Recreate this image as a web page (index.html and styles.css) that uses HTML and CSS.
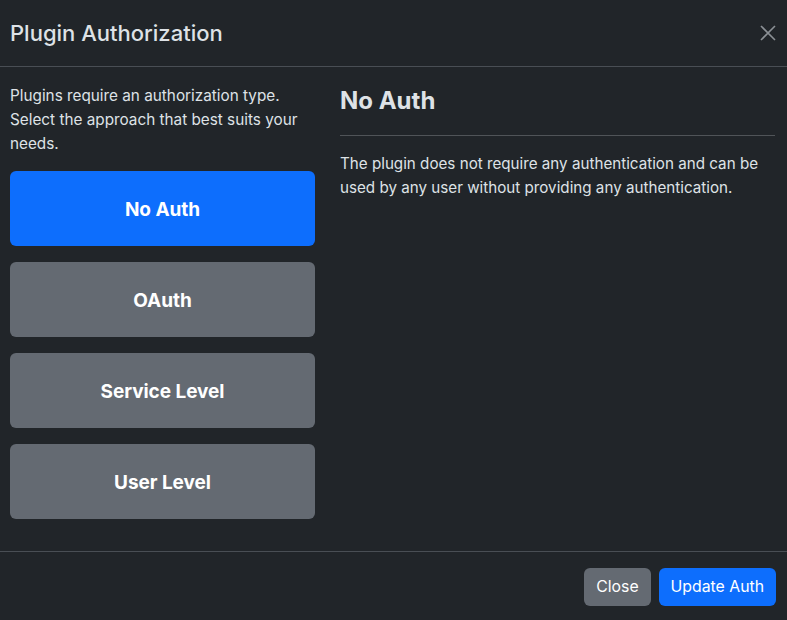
FILE: index.html
```html
<!DOCTYPE html>
<html lang="en">
<head>
<meta charset="utf-8">
<title>Plugin Authorization</title>
<link rel="stylesheet" href="styles.css">
</head>
<body>
<div class="modal">
  <header class="modal-header">
    <h1 class="modal-title">Plugin Authorization</h1>
    <button class="btn-close" aria-label="Close">
      <svg width="16" height="16" viewBox="0 0 16 16"><path d="M1 1L15 15M15 1L1 15" stroke="#8b9095" stroke-width="1.6" fill="none"/></svg>
    </button>
  </header>
  <main class="modal-body">
    <section class="col-left">
      <p class="intro">Plugins require an authorization type. Select the approach that best suits your needs.</p>
      <div class="auth-list">
        <button class="auth-btn active">No Auth</button>
        <button class="auth-btn">OAuth</button>
        <button class="auth-btn">Service Level</button>
        <button class="auth-btn">User Level</button>
      </div>
    </section>
    <section class="col-right">
      <h2 class="auth-title">No Auth</h2>
      <hr class="divider">
      <p class="desc">The plugin does not require any authentication and can be used by any user without providing any authentication.</p>
    </section>
  </main>
  <footer class="modal-footer">
    <button class="btn btn-secondary">Close</button>
    <button class="btn btn-primary">Update Auth</button>
  </footer>
</div>
</body>
</html>
```
FILE: styles.css
```css
html, body {
  margin: 0;
  padding: 0;
  background: #212529;
}
body {
  font-family: Inter, "Noto Sans", "Liberation Sans", sans-serif;
  color: #dee2e6;
  font-size: 16px;
  line-height: 24px;
}
.modal {
  height: 620px;
  display: flex;
  flex-direction: column;
  background: #212529;
}
.modal-header {
  height: 66px;
  border-bottom: 1px solid #494e54;
  display: flex;
  align-items: center;
  justify-content: space-between;
  padding: 0 11px 0 10px;
  flex: none;
}
.modal-title {
  margin: 0;
  font-size: 22px;
  font-weight: 500;
  line-height: 30px;
  color: #dee2e6;
}
.btn-close {
  background: none;
  border: 0;
  padding: 0;
  width: 16px;
  height: 16px;
  display: flex;
  cursor: pointer;
}
.modal-body {
  flex: 1;
  display: flex;
  gap: 25px;
  padding: 17px 12px 0 10px;
}
.col-left {
  width: 305px;
  flex: none;
}
.intro {
  margin: 0 0 15px;
  font-size: 15.3px;
}
.auth-list {
  display: flex;
  flex-direction: column;
  gap: 16px;
}
.auth-btn {
  height: 75px;
  padding: 2px 0 0;
  border: 0;
  border-radius: 6px;
  background: #646a72;
  color: #fff;
  font-family: inherit;
  font-size: 19px;
  font-weight: 700;
  letter-spacing: -0.05px;
  cursor: pointer;
}
.auth-btn.active {
  background: #0d6efd;
}
.col-right {
  flex: 1;
}
.auth-title {
  margin: 0;
  padding-top: 3px;
  font-size: 24px;
  line-height: 28px;
  font-weight: 700;
  color: #dee2e6;
}
.divider {
  margin: 20px 0 16px;
  border: 0;
  border-top: 1px solid #505458;
}
.desc {
  margin: 0;
  font-size: 15.2px;
}
.modal-footer {
  flex: none;
  height: 67px;
  border-top: 1px solid #494e54;
  display: flex;
  align-items: center;
  justify-content: flex-end;
  gap: 8px;
  padding: 1px 11px 0 10px;
}
.btn {
  height: 38px;
  border: 0;
  border-radius: 6px;
  padding: 0 12px;
  font-family: inherit;
  font-size: 15.8px;
  color: #fff;
  cursor: pointer;
}
.btn-secondary {
  background: #646a72;
}
.btn-primary {
  background: #0d6efd;
}
```
